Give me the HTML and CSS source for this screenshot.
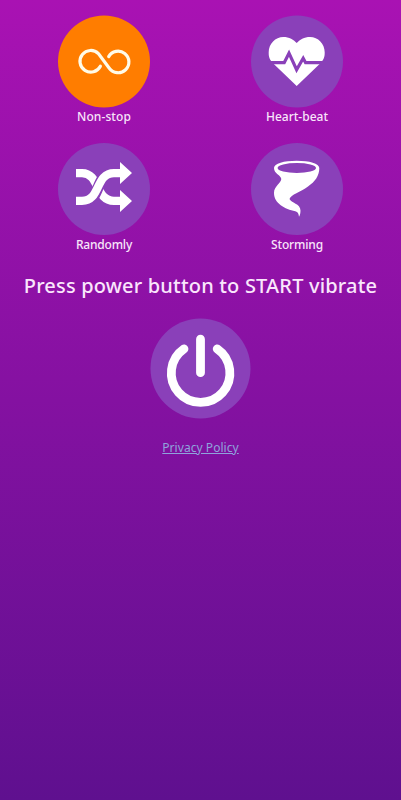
FILE: index.html
```html
<!DOCTYPE html>
<html lang="en">
<head>
    <meta charset="UTF-8">
    <meta name="viewport" content="width=device-width, initial-scale=1.0">
    <title>Vibrate</title>
    <link rel="stylesheet" href="styles.css">
</head>
<body>
    <main class="app">
        <div class="modes">
            <div class="mode active">
                <svg class="mode-icon" viewBox="0 0 92 92">
                    <circle class="disc" cx="46" cy="46.5" r="46"/>
                    <path class="line" d="M42.4 51.2A10.8 10.8 0 1 1 40.4 38.6L51.3 53.2A10.8 10.8 0 1 0 50.7 41.6"/>
                </svg>
                <span class="mode-label non-stop">Non-stop</span>
            </div>
            <div class="mode">
                <svg class="mode-icon" viewBox="0 0 92 92">
                    <circle class="disc" cx="46" cy="46.5" r="46"/>
                    <path class="fill" d="M45.7 71L22 48.2C17.5 43.7 17.7 39.7 17.7 37.2C17.7 28.7 24.5 21.9 32.3 21.9C38 21.9 43 24.5 45.7 28.1C48.4 24.5 53.4 21.9 59.1 21.9C67 21.9 73.7 28.7 73.7 37.2C73.7 39.7 73.9 43.7 69.4 48.2Z"/>
                    <path class="pulse" d="M16 47.7H33.2L38 38.2L45.6 54.7L52.2 43.2L54.6 47.7H76"/>
                </svg>
                <span class="mode-label">Heart-beat</span>
            </div>
            <div class="mode">
                <svg class="mode-icon" viewBox="0 0 92 92">
                    <circle class="disc" cx="46" cy="46" r="46"/>
                    <path class="band" d="M18 30.1H24C42 30.1 37 57.9 56 57.9H63"/>
                    <path class="band-gap" d="M27 57.9C43 57.9 37 30.1 55 30.1"/>
                    <path class="band" d="M18 57.9H24C43 57.9 37 30.1 56 30.1H63"/>
                    <path class="fill" d="M62 19L74 30L62 41ZM62 47L74 58L62 69Z"/>
                </svg>
                <span class="mode-label randomly">Randomly</span>
            </div>
            <div class="mode">
                <svg class="mode-icon" viewBox="0 0 92 92">
                    <circle class="disc" cx="46" cy="46" r="46"/>
                    <path class="fill" d="M23 25C23 20.5 33 17.7 45.7 17.7S68.3 20.5 68.3 25C68.3 33 64 38.5 57 43.5C49.5 49 39.8 51.5 38.5 56C40 60 49.5 60.5 49.5 67.5C49.5 70 49 72.5 48 73.7C47.5 70.5 47 69 44.3 68.3C34 66 23 60.5 23 50C23 43 30 40.5 30.3 36C30 32 23 31 23 25Z"/>
                    <ellipse class="hole" cx="45.8" cy="25" rx="19.2" ry="5"/>
                </svg>
                <span class="mode-label storming">Storming</span>
            </div>
        </div>

        <h1 class="hint">Press power button to START vibrate</h1>

        <button class="power" aria-label="Power">
            <svg viewBox="0 0 100 100">
                <circle class="disc" cx="49.5" cy="50.5" r="50"/>
                <path d="M33 30.9A29.3 29.3 0 1 0 66.2 30.9M49.5 21.2V54.7"/>
            </svg>
        </button>

        <a class="privacy" href="#">Privacy Policy</a>
    </main>
</body>
</html>
```

FILE: styles.css
```css
* {
    box-sizing: border-box;
}

body {
    margin: 0;
    font-family: "Noto Sans", sans-serif;
    color: #fff;
}

.app {
    display: flex;
    flex-direction: column;
    align-items: center;
    height: 800px;
    padding-top: 15px;
    background: linear-gradient(#a912b3, #5f108f);
}

.modes {
    display: grid;
    grid-template-columns: 92px 92px;
    column-gap: 101px;
    row-gap: 18px;
}

.mode {
    display: flex;
    flex-direction: column;
    align-items: center;
    height: 110px;
}

.mode-icon {
    flex: none;
    width: 92px;
    height: 92px;
    overflow: visible;
}

.disc {
    fill: #8a40b9;
}

.mode.active .disc {
    fill: #ff7d00;
}

.mode-label {
    font-size: 12px;
    font-weight: 500;
    line-height: 19px;
    white-space: nowrap;
    color: #f8e5fa;
}

.non-stop {
    letter-spacing: 0.1px;
}

.randomly {
    letter-spacing: -0.2px;
}

.storming {
    letter-spacing: -0.15px;
}

.fill {
    fill: #fff;
}

.line {
    fill: none;
    stroke: #fffbe8;
    stroke-width: 3.2;
    stroke-linecap: round;
}

.pulse {
    fill: none;
    stroke: #8a40b9;
    stroke-width: 3.2;
}

.band {
    fill: none;
    stroke: #fff;
    stroke-width: 8.3;
}

.band-gap {
    fill: none;
    stroke: #8a40b9;
    stroke-width: 11;
}

.hole {
    fill: #8a40b9;
}

.hint {
    margin: 17px 0 0;
    font-size: 20px;
    font-weight: 500;
    line-height: 32px;
    letter-spacing: 0.18px;
    white-space: nowrap;
    color: #fae6fc;
}

.power {
    width: 100px;
    height: 100px;
    margin-top: 16px;
    padding: 0;
    border: none;
    background: none;
    cursor: pointer;
}

.power svg {
    display: block;
    overflow: visible;
}

.power path {
    fill: none;
    stroke: #fff;
    stroke-width: 8.8;
    stroke-linecap: round;
}

.privacy {
    margin-top: 21px;
    font-size: 12px;
    line-height: 18px;
    letter-spacing: 0.05px;
    color: #8fa3dc;
}
```
